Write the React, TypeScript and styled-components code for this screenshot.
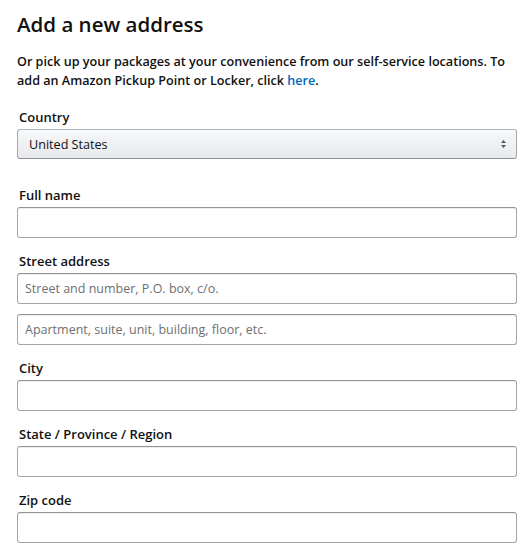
import React from "react";
import styled, { createGlobalStyle } from "styled-components";

const GlobalStyle = createGlobalStyle`
  html, body {
    margin: 0;
    padding: 0;
    background: #fff;
  }
  body {
    font-family: "Open Sans", "Noto Sans", Arial, sans-serif;
    color: #111;
  }
  * { box-sizing: border-box; }
`;

const Page = styled.div`
  width: 529px;
  padding: 9px 12px 12px 17px;
`;

const Title = styled.h1`
  margin: 0 0 13px;
  font-size: 20.5px;
  line-height: 30px;
  font-weight: 600;
  color: #111;
`;

const Intro = styled.p`
  margin: 0 0 18px;
  font-size: 12.6px;
  line-height: 19px;
  font-weight: 600;
  color: #111;
`;

const Link = styled.a`
  color: #0066c0;
  text-decoration: none;
`;

const Field = styled.div<{ $gap?: number }>`
  display: flex;
  flex-direction: column;
  margin-bottom: ${(p) => p.$gap ?? 14}px;
`;

const Label = styled.label`
  display: block;
  font-size: 13px;
  line-height: 19px;
  font-weight: 600;
  color: #111;
  padding: 0 0 2px 2px;
`;

const Input = styled.input`
  width: 100%;
  height: 31px;
  padding: 3px 7px;
  border: 1px solid #a6a6a6;
  border-top-color: #949494;
  border-radius: 3px;
  box-shadow: 0 1px 0 rgba(255, 255, 255, 0.5), 0 1px 0 rgba(0, 0, 0, 0.07) inset;
  font-family: inherit;
  font-size: 12.5px;
  color: #111;
  background: #fff;
  outline: none;
  & + & {
    margin-top: 10px;
  }
  &::placeholder {
    color: #6f6f6f;
  }
`;

const SelectBox = styled.div`
  position: relative;
  height: 30px;
  border: 1px solid #adb1b8;
  border-color: #adb1b8 #a2a6ac #8d9096;
  border-radius: 3px;
  background: linear-gradient(to bottom, #f7f8fa, #e7e9ec);
  box-shadow: 0 1px 0 rgba(255, 255, 255, 0.6) inset;
  display: flex;
  align-items: center;
  padding: 0 11px;
  font-size: 12.6px;
  color: #111;
`;

const Arrows = styled.svg`
  position: absolute;
  right: 9px;
  top: 50%;
  transform: translateY(-50%);
`;

const SelectArrows = () => (
  <Arrows width="7" height="10" viewBox="0 0 7 10">
    <path d="M3.5 1 L6 4 L1 4 Z" fill="#555" />
    <path d="M3.5 9 L6 6 L1 6 Z" fill="#555" />
  </Arrows>
);

export default function App() {
  return (
    <>
      <GlobalStyle />
      <Page>
        <Title>Add a new address</Title>
        <Intro>
          Or pick up your packages at your convenience from our self-service locations. To
          add an Amazon Pickup Point or Locker, click <Link href="#">here</Link>.
        </Intro>
        <Field $gap={27}>
          <Label>Country</Label>
          <SelectBox>
            United States
            <SelectArrows />
          </SelectBox>
        </Field>
        <Field>
          <Label>Full name</Label>
          <Input />
        </Field>
        <Field>
          <Label>Street address</Label>
          <Input placeholder="Street and number, P.O. box, c/o." />
          <Input placeholder="Apartment, suite, unit, building, floor, etc." />
        </Field>
        <Field>
          <Label>City</Label>
          <Input />
        </Field>
        <Field>
          <Label>State / Province / Region</Label>
          <Input />
        </Field>
        <Field>
          <Label>Zip code</Label>
          <Input />
        </Field>
      </Page>
    </>
  );
}
